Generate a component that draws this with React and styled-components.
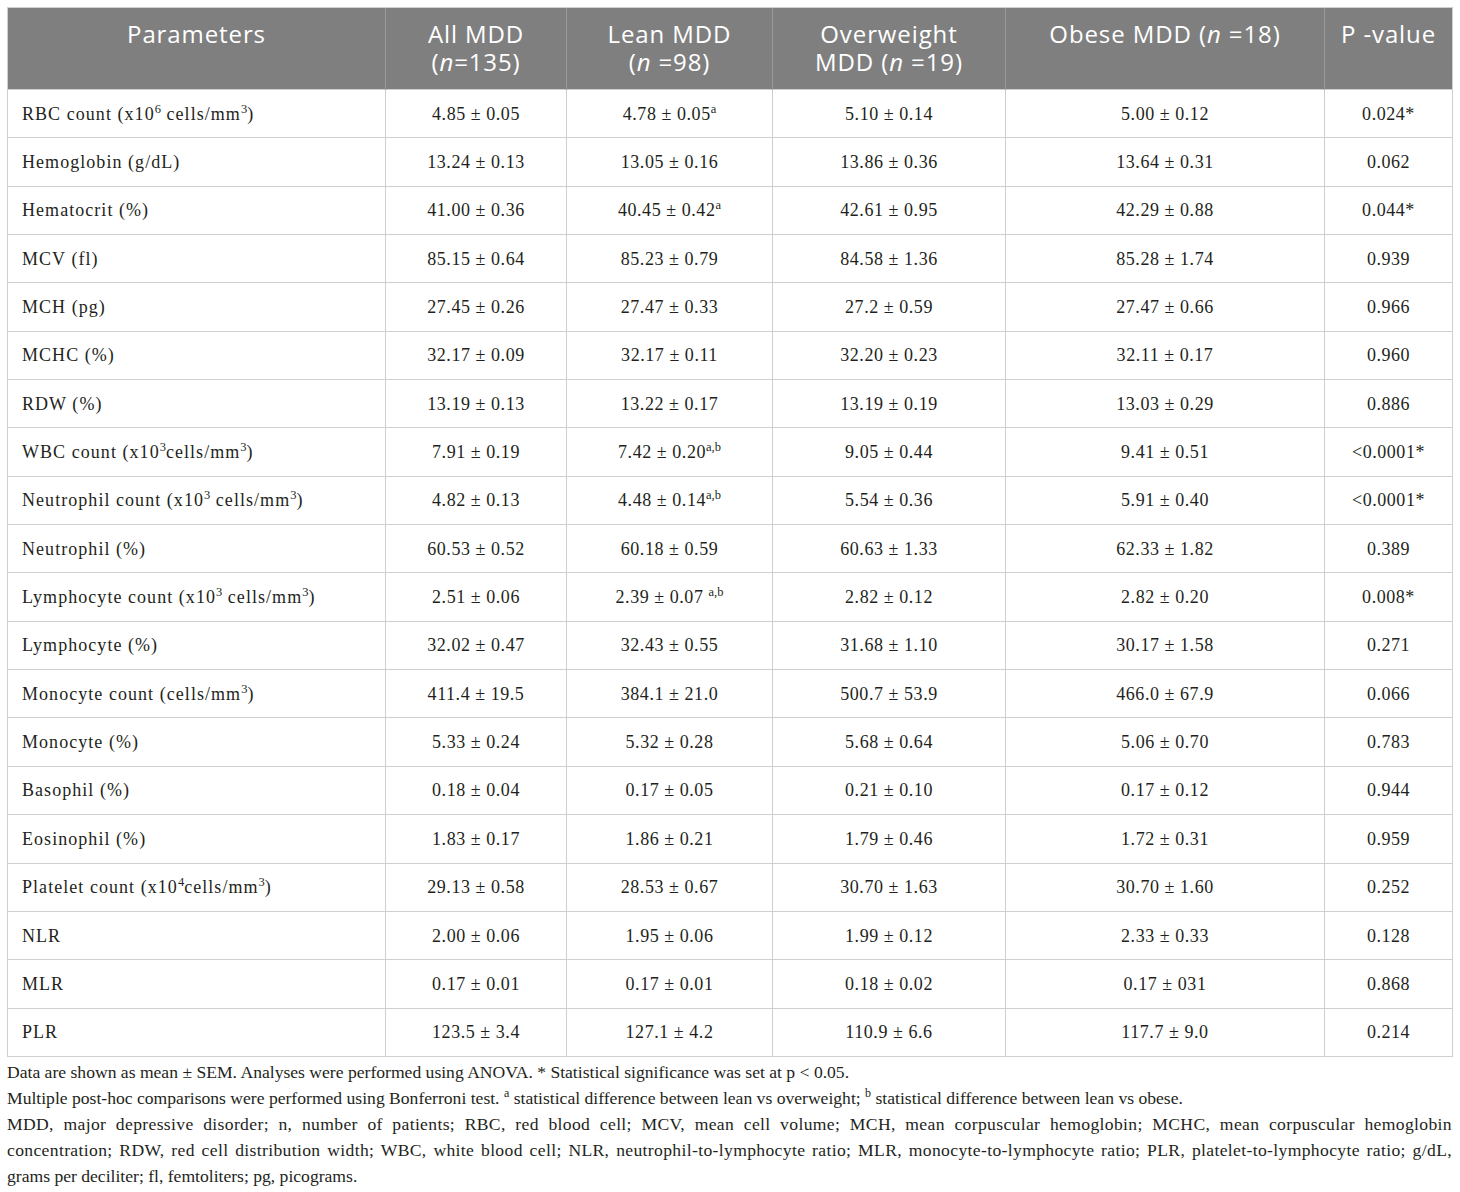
import React from 'react';
import styled, { createGlobalStyle } from 'styled-components';

const GlobalStyle = createGlobalStyle`
	html, body {
		margin: 0;
		padding: 0;
		background: #fff;
	}
`;

const Page = styled.div`
	padding: 7px 8px 0 7px;
	width: 1445px;
	font-family: 'Liberation Serif', 'Times New Roman', serif;
	color: #231f20;
`;

const Table = styled.table`
	width: 1445px;
	border-collapse: collapse;
	table-layout: fixed;
	border: 1px solid #cfcfcf;
`;

const HeadCell = styled.th`
	background: #7f7f7f;
	color: #fff;
	font-family: 'Open Sans', 'Noto Sans', sans-serif;
	font-weight: 400;
	font-size: 24px;
	letter-spacing: 0.9px;
	line-height: 28px;
	text-align: center;
	vertical-align: top;
	padding: 12px 6px 13px;
	height: 81px;
	box-sizing: border-box;
	border-left: 1px solid #9a9a9a;
	border-top: 1px solid #cfcfcf;
	white-space: nowrap;
	&:first-child {
		border-left: none;
	}
	i {
		font-style: italic;
	}
`;

const Row = styled.tr`
	height: 48.35px;
`;

const Cell = styled.td`
	border: 1px solid #cfcfcf;
	font-size: 18px;
	line-height: 22px;
	padding: 0 14px;
	text-align: ${props => (props.left ? 'left' : 'center')};
	vertical-align: middle;
	white-space: nowrap;
	letter-spacing: ${props => (props.left ? '1.05px' : '0.55px')};
	sup {
		font-size: 12.5px;
		line-height: 0;
		vertical-align: 7px;
		letter-spacing: 0;
	}
`;

const Notes = styled.div`
	margin-top: 2px;
	font-size: 17.6px;
	line-height: 26px;
	color: #231f20;
	sup {
		font-size: 12px;
		line-height: 0;
		vertical-align: 7px;
	}
`;

const NoteLine = styled.p`
	margin: 0;
	white-space: nowrap;
	${props =>
		props.justify &&
		`
		white-space: normal;
		letter-spacing: 0.35px;
		text-align: justify;
		text-align-last: justify;
	`}
`;

const widths = [378, 181, 206, 233, 319, 128];

const rows = [
	[<>RBC count (x10<sup>6</sup> cells/mm<sup>3</sup>)</>, '4.85 ± 0.05', <>4.78 ± 0.05<sup>a</sup></>, '5.10 ± 0.14', '5.00 ± 0.12', '0.024*'],
	['Hemoglobin (g/dL)', '13.24 ± 0.13', '13.05 ± 0.16', '13.86 ± 0.36', '13.64 ± 0.31', '0.062'],
	['Hematocrit (%)', '41.00 ± 0.36', <>40.45 ± 0.42<sup>a</sup></>, '42.61 ± 0.95', '42.29 ± 0.88', '0.044*'],
	['MCV (fl)', '85.15 ± 0.64', '85.23 ± 0.79', '84.58 ± 1.36', '85.28 ± 1.74', '0.939'],
	['MCH (pg)', '27.45 ± 0.26', '27.47 ± 0.33', '27.2 ± 0.59', '27.47 ± 0.66', '0.966'],
	['MCHC (%)', '32.17 ± 0.09', '32.17 ± 0.11', '32.20 ± 0.23', '32.11 ± 0.17', '0.960'],
	['RDW (%)', '13.19 ± 0.13', '13.22 ± 0.17', '13.19 ± 0.19', '13.03 ± 0.29', '0.886'],
	[<>WBC count (x10<sup>3</sup>cells/mm<sup>3</sup>)</>, '7.91 ± 0.19', <>7.42 ± 0.20<sup>a,b</sup></>, '9.05 ± 0.44', '9.41 ± 0.51', '<0.0001*'],
	[<>Neutrophil count (x10<sup>3</sup> cells/mm<sup>3</sup>)</>, '4.82 ± 0.13', <>4.48 ± 0.14<sup>a,b</sup></>, '5.54 ± 0.36', '5.91 ± 0.40', '<0.0001*'],
	['Neutrophil (%)', '60.53 ± 0.52', '60.18 ± 0.59', '60.63 ± 1.33', '62.33 ± 1.82', '0.389'],
	[<>Lymphocyte count (x10<sup>3</sup> cells/mm<sup>3</sup>)</>, '2.51 ± 0.06', <>2.39 ± 0.07 <sup>a,b</sup></>, '2.82 ± 0.12', '2.82 ± 0.20', '0.008*'],
	['Lymphocyte (%)', '32.02 ± 0.47', '32.43 ± 0.55', '31.68 ± 1.10', '30.17 ± 1.58', '0.271'],
	[<>Monocyte count (cells/mm<sup>3</sup>)</>, '411.4 ± 19.5', '384.1 ± 21.0', '500.7 ± 53.9', '466.0 ± 67.9', '0.066'],
	['Monocyte (%)', '5.33 ± 0.24', '5.32 ± 0.28', '5.68 ± 0.64', '5.06 ± 0.70', '0.783'],
	['Basophil (%)', '0.18 ± 0.04', '0.17 ± 0.05', '0.21 ± 0.10', '0.17 ± 0.12', '0.944'],
	['Eosinophil (%)', '1.83 ± 0.17', '1.86 ± 0.21', '1.79 ± 0.46', '1.72 ± 0.31', '0.959'],
	[<>Platelet count (x10<sup>4</sup>cells/mm<sup>3</sup>)</>, '29.13 ± 0.58', '28.53 ± 0.67', '30.70 ± 1.63', '30.70 ± 1.60', '0.252'],
	['NLR', '2.00 ± 0.06', '1.95 ± 0.06', '1.99 ± 0.12', '2.33 ± 0.33', '0.128'],
	['MLR', '0.17 ± 0.01', '0.17 ± 0.01', '0.18 ± 0.02', '0.17 ± 031', '0.868'],
	['PLR', '123.5 ± 3.4', '127.1 ± 4.2', '110.9 ± 6.6', '117.7 ± 9.0', '0.214'],
];

export default function App() {
	return (
		<Page>
			<GlobalStyle />
			<Table>
				<colgroup>
					{widths.map((w, i) => (
						<col key={i} style={{ width: w }} />
					))}
				</colgroup>
				<thead>
					<tr>
						<HeadCell>Parameters</HeadCell>
						<HeadCell>
							All MDD
							<br />(<i>n</i>=135)
						</HeadCell>
						<HeadCell>
							Lean MDD
							<br />(<i>n</i> =98)
						</HeadCell>
						<HeadCell>
							Overweight
							<br />
							MDD (<i>n</i> =19)
						</HeadCell>
						<HeadCell>
							Obese MDD (<i>n</i> =18)
						</HeadCell>
						<HeadCell>P -value</HeadCell>
					</tr>
				</thead>
				<tbody>
					{rows.map((r, i) => (
						<Row key={i}>
							{r.map((c, j) => (
								<Cell key={j} left={j === 0}>
									{c}
								</Cell>
							))}
						</Row>
					))}
				</tbody>
			</Table>
			<Notes>
				<NoteLine>
					Data are shown as mean ± SEM. Analyses were performed using ANOVA. * Statistical significance was set at p &lt; 0.05.
				</NoteLine>
				<NoteLine>
					Multiple post-hoc comparisons were performed using Bonferroni test. <sup>a</sup> statistical difference between lean vs overweight;{' '}
					<sup>b</sup> statistical difference between lean vs obese.
				</NoteLine>
				<NoteLine justify>
					MDD, major depressive disorder; n, number of patients; RBC, red blood cell; MCV, mean cell volume; MCH, mean corpuscular hemoglobin;
					MCHC, mean corpuscular hemoglobin
				</NoteLine>
				<NoteLine justify>
					concentration; RDW, red cell distribution width; WBC, white blood cell; NLR, neutrophil-to-lymphocyte ratio; MLR, monocyte-to-lymphocyte
					ratio; PLR, platelet-to-lymphocyte ratio; g/dL,
				</NoteLine>
				<NoteLine>grams per deciliter; fl, femtoliters; pg, picograms.</NoteLine>
			</Notes>
		</Page>
	);
}
